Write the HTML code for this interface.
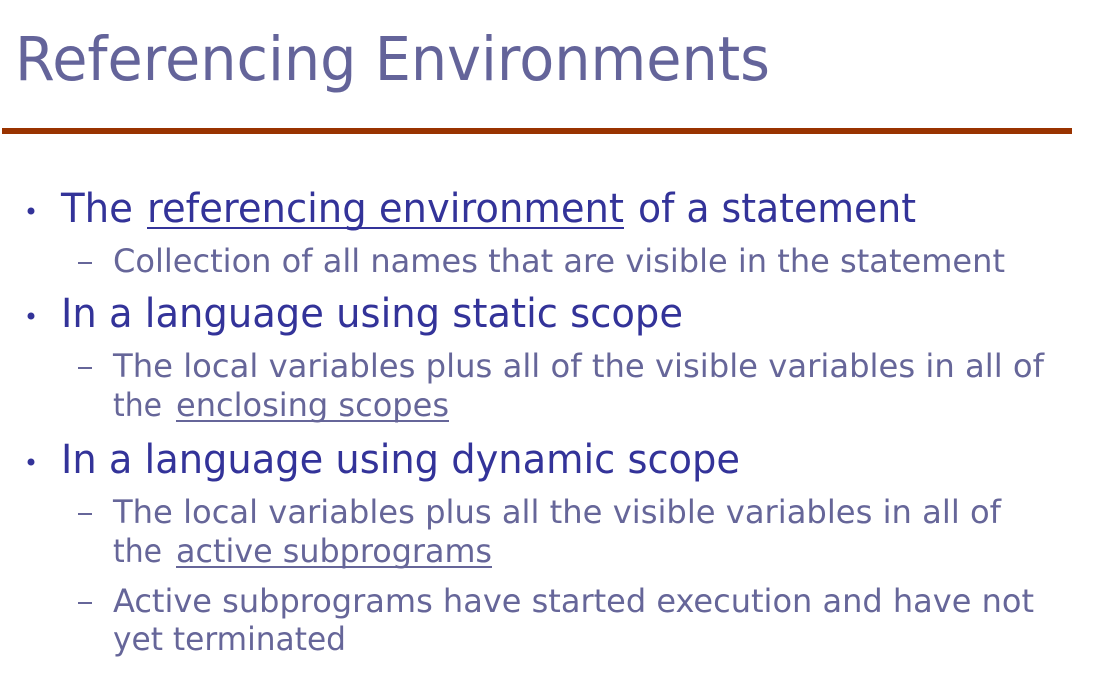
<!DOCTYPE html>
<html><head><style>
html,body{margin:0;padding:0;background:#fff;width:1104px;height:693px;overflow:hidden}
svg text{font-family:"DejaVu Sans","Liberation Sans",sans-serif}
.t{fill:#64649a;font-size:61px}
.a{fill:#333399;font-size:40px}
.b{fill:#666699;font-size:32px}
</style></head><body>
<svg width="1104" height="693" xmlns="http://www.w3.org/2000/svg">
<text class="t" x="15" y="80" textLength="755" lengthAdjust="spacingAndGlyphs">Referencing Environments</text>
<rect x="2" y="128" width="1070" height="6" fill="#993300"/>

<circle cx="31" cy="211" r="3.5" fill="#333399"/>
<text class="a" x="61" y="222" textLength="72" lengthAdjust="spacingAndGlyphs">The</text>
<text class="a" x="147" y="222" textLength="477" lengthAdjust="spacingAndGlyphs">referencing environment</text>
<rect x="147" y="227" width="477" height="2" fill="#333399"/>
<text class="a" x="638" y="222" textLength="278" lengthAdjust="spacingAndGlyphs">of a statement</text>
<rect x="78" y="262" width="14" height="2" fill="#666699"/>
<text class="b" x="113" y="272" textLength="892" lengthAdjust="spacingAndGlyphs">Collection of all names that are visible in the statement</text>

<circle cx="31" cy="316" r="3.5" fill="#333399"/>
<text class="a" x="61" y="327" textLength="622" lengthAdjust="spacingAndGlyphs">In a language using static scope</text>
<rect x="78" y="367" width="14" height="2" fill="#666699"/>
<text class="b" x="113" y="377" textLength="931" lengthAdjust="spacingAndGlyphs">The local variables plus all of the visible variables in all of</text>
<text class="b" x="113" y="416" textLength="49" lengthAdjust="spacingAndGlyphs">the</text>
<text class="b" x="176" y="416" textLength="273" lengthAdjust="spacingAndGlyphs">enclosing scopes</text>
<rect x="176" y="420" width="273" height="2" fill="#666699"/>

<circle cx="31" cy="462" r="3.5" fill="#333399"/>
<text class="a" x="61" y="473" textLength="679" lengthAdjust="spacingAndGlyphs">In a language using dynamic scope</text>
<rect x="78" y="513" width="14" height="2" fill="#666699"/>
<text class="b" x="113" y="523" textLength="888" lengthAdjust="spacingAndGlyphs">The local variables plus all the visible variables in all of</text>
<text class="b" x="113" y="562" textLength="49" lengthAdjust="spacingAndGlyphs">the</text>
<text class="b" x="176" y="562" textLength="316" lengthAdjust="spacingAndGlyphs">active subprograms</text>
<rect x="176" y="566" width="316" height="2" fill="#666699"/>
<rect x="78" y="602" width="14" height="2" fill="#666699"/>
<text class="b" x="113" y="612" textLength="921" lengthAdjust="spacingAndGlyphs">Active subprograms have started execution and have not</text>
<text class="b" x="113" y="650" textLength="233" lengthAdjust="spacingAndGlyphs">yet terminated</text>
</svg>
</body></html>
